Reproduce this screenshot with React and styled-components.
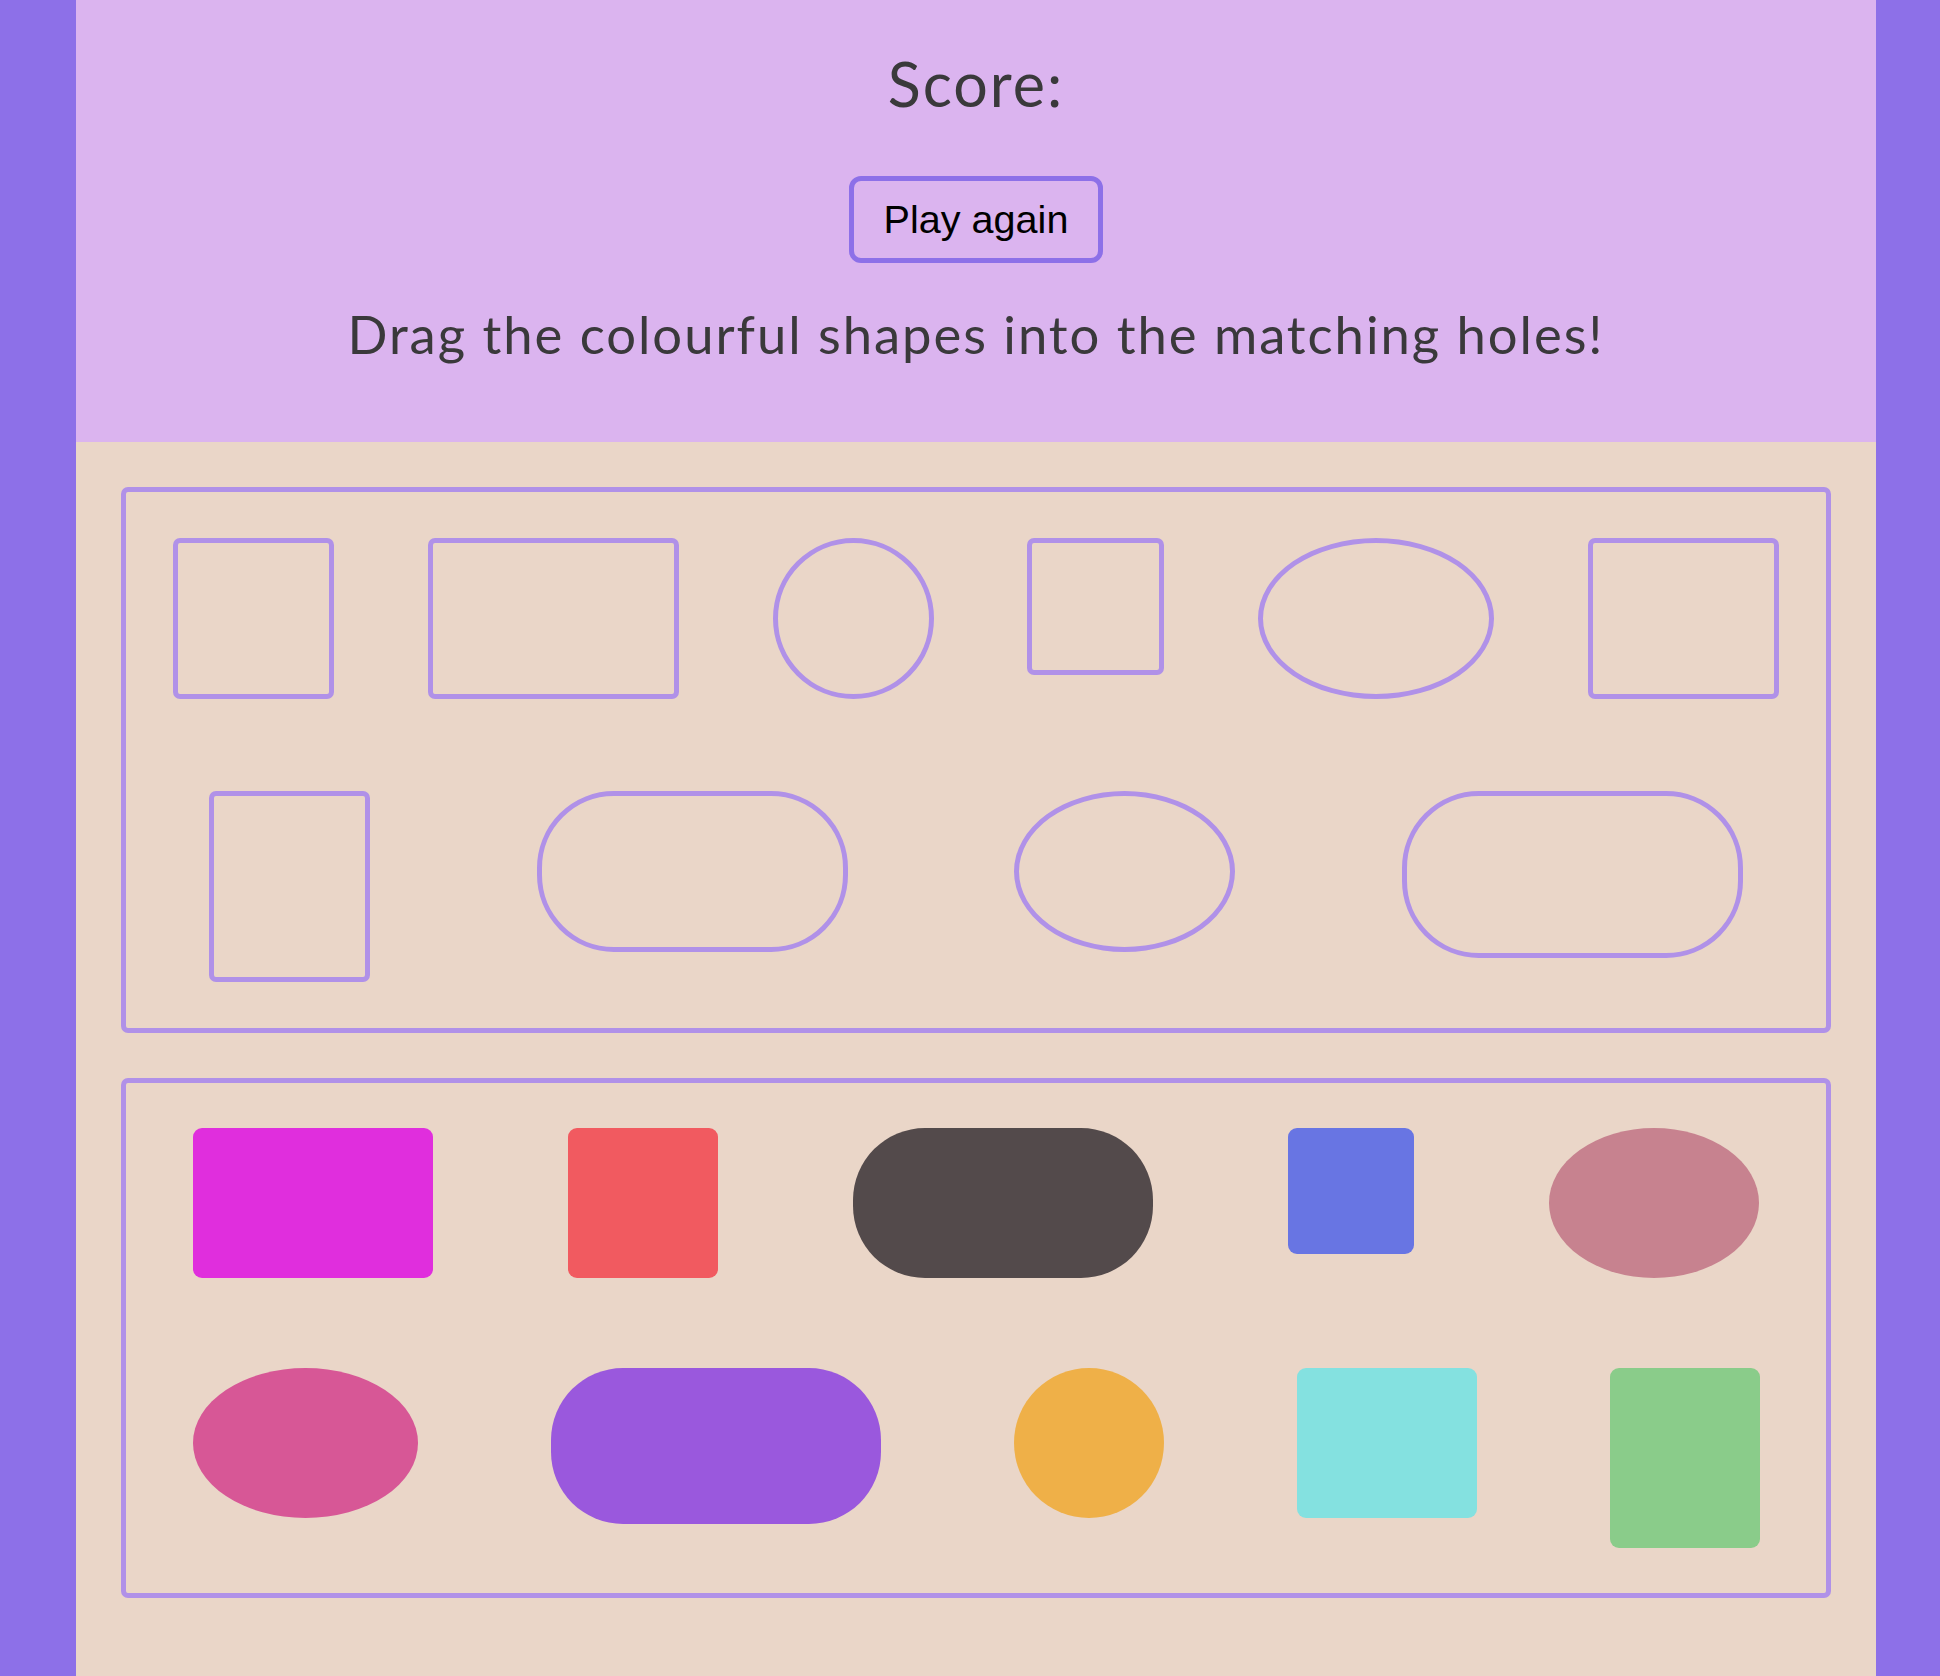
import React from "react";
import styled, { createGlobalStyle } from "styled-components";

const GlobalStyle = createGlobalStyle`
  html, body {
    margin: 0;
    padding: 0;
    background: #8d70e8;
  }
  * { box-sizing: border-box; }
`;

const Page = styled.div`
  display: flex;
  padding-left: 76px;
  min-height: 100vh;
`;

const Main = styled.main`
  width: 1800px;
  min-height: 1676px;
  background: #ead6c8;
  display: flex;
  flex-direction: column;
`;

const Header = styled.header`
  height: 442px;
  background: #dbb4ef;
  display: flex;
  flex-direction: column;
  align-items: center;
  padding-top: 53px;
  font-family: Lato, "Noto Sans", sans-serif;
  color: #3a393b;
`;

const Score = styled.h1`
  margin: 0;
  font-size: 61px;
  line-height: 1;
  font-weight: 400;
  letter-spacing: 2px;
`;

const PlayButton = styled.button`
  margin-top: 62px;
  padding: 16px 30px;
  border: 5px solid #8d70e8;
  border-radius: 12px;
  background: transparent;
  font-family: "Liberation Sans", Arial, sans-serif;
  font-size: 39.6px;
  line-height: normal;
  color: #000;
  cursor: pointer;
`;

const Instructions = styled.p`
  margin: 45px 0 0;
  font-size: 52.6px;
  line-height: 1;
  font-weight: 400;
  letter-spacing: 1.95px;
`;

const Board = styled.section`
  display: flex;
  flex-direction: column;
  gap: 45px;
  padding: 45px;
`;

const Tray = styled.div`
  border: 5px solid #b091e8;
  border-radius: 7px;
  display: flex;
  flex-direction: column;
`;

const Row = styled.div`
  display: flex;
  justify-content: space-around;
  align-items: flex-start;
`;

const radiusFor = (kind, extra = 0) => {
  if (kind === "oval") return "50%";
  if (kind === "pill") return `${72 + extra}px`;
  return `${8 + extra}px`;
};

const Hole = styled.div`
  flex-shrink: 0;
  box-sizing: content-box;
  margin: 46px;
  width: ${(p) => p.$w + 1}px;
  height: ${(p) => p.$h + 1}px;
  border: 5px solid #b091e8;
  border-radius: ${(p) => radiusFor(p.$kind, p.$kind === "rect" ? -1 : 5)};
`;

const Shape = styled.div`
  flex-shrink: 0;
  margin: 45px;
  width: ${(p) => p.$w}px;
  height: ${(p) => p.$h}px;
  background: ${(p) => p.$color};
  border-radius: ${(p) => radiusFor(p.$kind, p.$kind === "rect" ? 1 : 0)};
  cursor: grab;
`;

const holeRows = [
  [
    { kind: "rect", w: 150, h: 150 },
    { kind: "rect", w: 240, h: 150 },
    { kind: "oval", w: 150, h: 150 },
    { kind: "rect", w: 126, h: 126 },
    { kind: "oval", w: 225, h: 150 },
    { kind: "rect", w: 180, h: 150 },
  ],
  [
    { kind: "rect", w: 150, h: 180 },
    { kind: "pill", w: 300, h: 150 },
    { kind: "oval", w: 210, h: 150 },
    { kind: "pill", w: 330, h: 156 },
  ],
];

const shapeRows = [
  [
    { kind: "rect", w: 240, h: 150, color: "#e02edd" },
    { kind: "rect", w: 150, h: 150, color: "#f15a60" },
    { kind: "pill", w: 300, h: 150, color: "#534a4b" },
    { kind: "rect", w: 126, h: 126, color: "#6875e3" },
    { kind: "oval", w: 210, h: 150, color: "#c7828f" },
  ],
  [
    { kind: "oval", w: 225, h: 150, color: "#d75796" },
    { kind: "pill", w: 330, h: 156, color: "#9a58dd" },
    { kind: "oval", w: 150, h: 150, color: "#efb048" },
    { kind: "rect", w: 180, h: 150, color: "#84e1e0" },
    { kind: "rect", w: 150, h: 180, color: "#8acc8a" },
  ],
];

export default function App() {
  return (
    <>
      <GlobalStyle />
      <Page>
        <Main>
          <Header>
            <Score>Score:</Score>
            <PlayButton type="button">Play again</PlayButton>
            <Instructions>Drag the colourful shapes into the matching holes!</Instructions>
          </Header>
          <Board>
            <Tray>
              {holeRows.map((row, i) => (
                <Row key={i}>
                  {row.map((h, j) => (
                    <Hole key={j} $kind={h.kind} $w={h.w} $h={h.h} />
                  ))}
                </Row>
              ))}
            </Tray>
            <Tray>
              {shapeRows.map((row, i) => (
                <Row key={i}>
                  {row.map((s, j) => (
                    <Shape key={j} $kind={s.kind} $w={s.w} $h={s.h} $color={s.color} />
                  ))}
                </Row>
              ))}
            </Tray>
          </Board>
        </Main>
      </Page>
    </>
  );
}
